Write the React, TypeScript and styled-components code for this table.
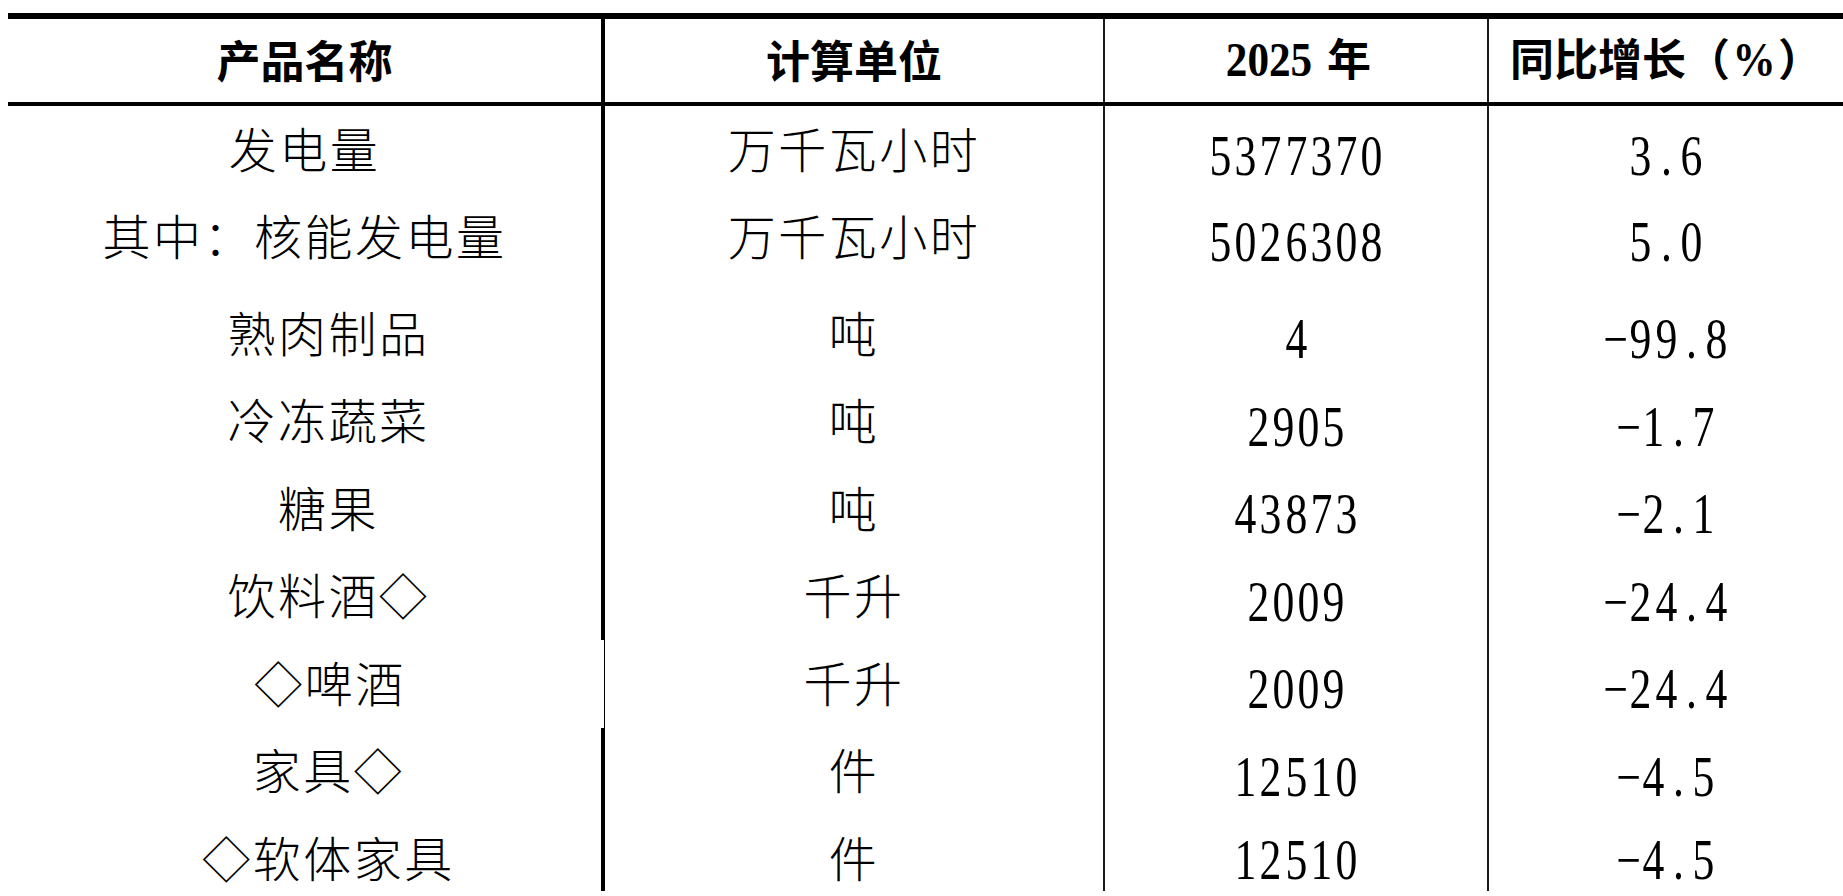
import React, { FC } from 'react';
import styled, { createGlobalStyle } from 'styled-components';

const GlobalStyle = createGlobalStyle`
    html, body {
        margin: 0;
        padding: 0;
        background: #fff;
    }
    body {
        font-family: "Noto Sans CJK SC", "Noto Sans", sans-serif;
        color: #000;
    }
`;

const Page = styled.div`
    height: 891px;
    padding: 13px 0 0 8px;
    box-sizing: border-box;
    overflow: hidden;
`;

const Table = styled.div`
    width: 1835px;
`;

const Grid = styled.div<{ $height: number }>`
    display: grid;
    grid-template-columns: 597px 500px 384px 1fr;
    height: ${({ $height }) => $height}px;
    box-sizing: border-box;
`;

const HeaderRow = styled(Grid)`
    border-top: 6px solid #000;
    border-bottom: 4px solid #000;
`;

const Cell = styled.div<{ $col: number; $thin?: boolean; $indent?: number; $padTop?: number; $padBottom?: number }>`
    display: flex;
    align-items: center;
    justify-content: center;
    box-sizing: border-box;
    padding-left: ${({ $indent }) => $indent || 0}px;
    padding-top: ${({ $padTop }) => $padTop || 0}px;
    padding-bottom: ${({ $padBottom }) => $padBottom || 0}px;
    border-right: ${({ $col, $thin }) =>
        $col === 0 ? ($thin ? '1px solid #000' : '4px solid #000') : $col === 3 ? 'none' : '2px solid #1a1a1a'};
`;

const HeadText = styled.span`
    display: inline-block;
    font-size: 44px;
    font-weight: 700;
    line-height: 1;
    padding-bottom: 3px;
    white-space: nowrap;
`;

const HeadLatin = styled.span`
    font-family: "Liberation Serif", serif;
    font-weight: 700;
    font-size: 48px;
    display: inline-block;
    transform: scaleX(0.9);
`;

const CjkText = styled.span`
    display: inline-block;
    font-size: 48px;
    font-weight: 300;
    line-height: 1;
    letter-spacing: 2.5px;
    padding-bottom: 6px;
    white-space: nowrap;
`;

const NumText = styled.span`
    display: flex;
    white-space: nowrap;
`;

const Glyph = styled.span`
    display: inline-block;
    width: 33px;
    margin: 0 -3.85px;
    text-align: center;
    font-family: "Liberation Serif", serif;
    font-size: 56px;
    line-height: 0.8;
    transform: scaleX(0.78);
`;

type Item = {
    name: string;
    unit: string;
    value: string;
    growth: string;
};

const items: Item[] = [
    { name: '发电量', unit: '万千瓦小时', value: '5377370', growth: '3.6' },
    { name: '其中：核能发电量', unit: '万千瓦小时', value: '5026308', growth: '5.0' },
    { name: '熟肉制品', unit: '吨', value: '4', growth: '−99.8' },
    { name: '冷冻蔬菜', unit: '吨', value: '2905', growth: '−1.7' },
    { name: '糖果', unit: '吨', value: '43873', growth: '−2.1' },
    { name: '饮料酒◇', unit: '千升', value: '2009', growth: '−24.4' },
    { name: '◇啤酒', unit: '千升', value: '2009', growth: '−24.4' },
    { name: '家具◇', unit: '件', value: '12510', growth: '−4.5' },
    { name: '◇软体家具', unit: '件', value: '12510', growth: '−4.5' },
];

// row heights follow the source page: a small gap after the first group, last row cut by the page edge
const rowHeights = [88, 96, 87.5, 87.5, 87.5, 87.5, 87.5, 87.5, 76];
const padTops = [0, 0, 0, 0, 0, 0, 0, 0, 12];
const padBottoms = [0, 11, 0, 0, 0, 0, 0, 0, 0];
const numDrops = [12, 12, 12, 12, 12, 12, 12, 12, 2];

const Num: FC<{ text: string }> = ({ text }) => (
    <NumText>
        {text.split('').map((ch, i) => (
            <Glyph key={i}>{ch}</Glyph>
        ))}
    </NumText>
);

export default function App() {
    return (
        <>
            <GlobalStyle />
            <Page>
                <Table>
                    <HeaderRow $height={93}>
                        <Cell $col={0}>
                            <HeadText>产品名称</HeadText>
                        </Cell>
                        <Cell $col={1}>
                            <HeadText>计算单位</HeadText>
                        </Cell>
                        <Cell $col={2}>
                            <HeadText>
                                <HeadLatin>2025</HeadLatin> 年
                            </HeadText>
                        </Cell>
                        <Cell $col={3}>
                            <HeadText>
                                同比增长（<HeadLatin>%</HeadLatin>）
                            </HeadText>
                        </Cell>
                    </HeaderRow>
                    {items.map((item, i) => (
                        <Grid key={i} $height={rowHeights[i]}>
                            <Cell
                                $col={0}
                                $thin={i === 6}
                                $indent={i > 1 ? 48 : 0}
                                $padTop={padTops[i]}
                                $padBottom={padBottoms[i]}
                            >
                                <CjkText>{item.name}</CjkText>
                            </Cell>
                            <Cell $col={1} $padTop={padTops[i]} $padBottom={padBottoms[i]}>
                                <CjkText>{item.unit}</CjkText>
                            </Cell>
                            <Cell $col={2} $padTop={padTops[i] + numDrops[i]} $padBottom={padBottoms[i]}>
                                <Num text={item.value} />
                            </Cell>
                            <Cell $col={3} $padTop={padTops[i] + numDrops[i]} $padBottom={padBottoms[i]}>
                                <Num text={item.growth} />
                            </Cell>
                        </Grid>
                    ))}
                </Table>
            </Page>
        </>
    );
}
